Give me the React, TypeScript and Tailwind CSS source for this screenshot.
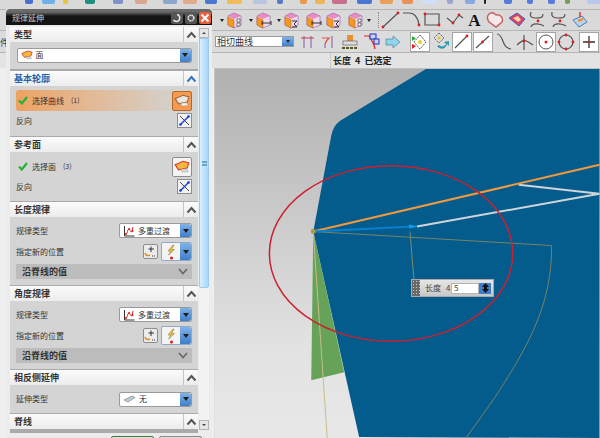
import type { ReactNode } from "react";

const cjk = { fontFamily: '"Noto Sans CJK SC", "Liberation Sans", sans-serif' };

function Chevron({ color = "#555" }: { color?: string }) {
  return (
    <svg width="11" height="8" viewBox="0 0 11 8">
      <path d="M1.5 6.5 L5.5 2 L9.5 6.5" fill="none" stroke={color} strokeWidth="2" />
    </svg>
  );
}

function SectionHeader({ title, active = false }: { title: string; active?: boolean }) {
  return (
    <div className="flex h-[15px] items-stretch bg-gradient-to-b from-[#fbfbfb] to-[#ececec]">
      <div className={`flex flex-1 items-center pl-1 text-[9px] font-bold ${active ? "text-[#1f63a8]" : "text-[#333]"}`}>
        {title}
      </div>
      <div className="flex w-[15px] items-center justify-center border-l border-[#c4c4c4]">
        <Chevron color={active ? "#2f77c4" : "#555"} />
      </div>
    </div>
  );
}

function DropArrow() {
  return (
    <div className="flex w-[11px] items-center justify-center rounded-r-[2px] bg-gradient-to-b from-[#7fb2e8] to-[#3f7fc9]">
      <div className="h-0 w-0 border-x-[3.5px] border-t-[4px] border-x-transparent border-t-[#1c1c1c]" />
    </div>
  );
}

function FaceIcon({ w = 14, pale = false }: { w?: number; pale?: boolean }) {
  return (
    <svg width={w} height={w * 0.8} viewBox="0 0 14 11">
      <path
        d="M1 4 L8 1 L13 2.5 L11.5 7 L4 8.5 Z"
        fill={pale ? "#ece6df" : "#f6b93a"}
        stroke={pale ? "#9a6a48" : "#d93a2a"}
        strokeWidth="1"
      />
      <path d="M6 8 L11 7.5 L12.5 10 L7 10.5 Z" fill={pale ? "#f6f1ec" : "#d8d8d8"} stroke="#999" strokeWidth="0.4" />
    </svg>
  );
}

function LawIcon() {
  return (
    <svg width="12" height="12" viewBox="0 0 12 12">
      <path d="M1.5 1 V11 H11.5" fill="none" stroke="#333" strokeWidth="1" />
      <path d="M2.5 9.5 C5 9 4 4 6 4 C7 4 7 7 9 7 L10 2" fill="none" stroke="#d22" strokeWidth="1" />
      <circle cx="3" cy="9" r="1" fill="#d22" />
      <circle cx="6" cy="4" r="1" fill="#d22" />
      <circle cx="9.5" cy="6" r="1" fill="#d22" />
    </svg>
  );
}

function Combo({ icon, label, className }: { icon: ReactNode; label: string; className: string }) {
  return (
    <div className={`flex h-[15px] overflow-hidden rounded-[2px] border border-[#9a9a9a] bg-white ${className}`}>
      <div className="flex flex-1 items-center gap-[3px] pl-[3px] text-[8px] text-[#333]">
        {icon}
        {label}
      </div>
      <DropArrow />
    </div>
  );
}

function ReverseBtn() {
  return (
    <div className="flex h-[15px] w-[15px] items-center justify-center border border-[#8d8d8d] bg-[#f2f2f2]">
      <svg width="13" height="13" viewBox="0 0 13 13">
        <path d="M2 2 L11 11" stroke="#444" strokeWidth="1" />
        <path d="M11 2 L2 11" stroke="#1a3fd0" strokeWidth="1.5" />
        <circle cx="10.5" cy="2.5" r="1.3" fill="#1a3fd0" />
        <circle cx="2.5" cy="10.5" r="1.3" fill="#1a3fd0" />
      </svg>
    </div>
  );
}

function Check() {
  return (
    <svg width="10" height="9" viewBox="0 0 10 9">
      <path d="M1 4.5 L3.8 7.5 L9 1" fill="none" stroke="#26b23a" strokeWidth="2.2" />
    </svg>
  );
}

function LawBody() {
  return (
    <div className="flex h-[68px] flex-col bg-[#d4d4d4] px-[6px] pt-[6px]">
      <div className="flex h-[15px] items-center justify-between text-[8px] text-[#333]">
        规律类型
        <Combo className="w-[73px]" icon={<LawIcon />} label="多重过渡" />
      </div>
      <div className="mt-[4px] flex h-[19px] items-center justify-between text-[8px] text-[#333]">
        指定新的位置
        <div className="flex items-center gap-[3px]">
          <div className="flex h-[15px] w-[15px] items-center justify-center rounded-[2px] border border-[#8d8d8d] bg-[#ececec]">
            <svg width="13" height="13" viewBox="0 0 13 13">
              <path d="M7 1.5 V7 M4.5 4 H10" stroke="#333" strokeWidth="1" />
              <path d="M1 8 C2 11 4 11 6 10" fill="none" stroke="#e8891c" strokeWidth="1.5" />
              <path d="M8 11 H12" stroke="#333" strokeDasharray="1 1" />
            </svg>
          </div>
          <div className="flex h-[19px] w-[31px] overflow-hidden rounded-[2px] border border-[#8fa9c6] bg-[#f4f4f4]">
            <div className="flex flex-1 items-center justify-center">
              <svg width="14" height="16" viewBox="0 0 14 16">
                <path d="M9 1 L4 7 H7 L4.5 11 L10.5 5.5 H7.5 L10 1 Z" fill="#f2c230" stroke="#8d8050" strokeWidth="0.6" />
                <circle cx="7.5" cy="14" r="1.5" fill="#e01818" />
              </svg>
            </div>
            <DropArrow />
          </div>
        </div>
      </div>
      <div className="mt-[3px] flex h-[15px] items-center justify-between bg-[#bcbcbc] px-1 pl-[6px] text-[9px] font-bold text-[#333]">
        沿脊线的值
        <svg width="10" height="7" viewBox="0 0 10 7">
          <path d="M1 1 L5 5.5 L9 1" fill="none" stroke="#666" strokeWidth="1.6" />
        </svg>
      </div>
    </div>
  );
}

function SelectRow({ label, count, active = false }: { label: string; count: string; active?: boolean }) {
  return (
    <div className="flex h-[21px] items-center">
      <div
        className={`flex h-[21px] w-[156px] items-center gap-[4px] rounded-l-[3px] pl-[1px] text-[8px] text-[#333] ${
          active ? "bg-gradient-to-r from-[#eda261] to-[#d4d0ca]" : ""
        }`}
      >
        <span className="ml-[1px]">
          <Check />
        </span>
        <span>{label}</span>
        <span className="ml-[3px] text-[7px]">{count}</span>
      </div>
      <div
        className={`flex h-[20px] w-[20px] items-center justify-center rounded-[2px] border ${
          active ? "border-[#b8672a] bg-[#f69a4f]" : "border-[#8d8d8d] bg-[#f3f3f3]"
        }`}
      >
        <FaceIcon w={16} pale={active} />
      </div>
    </div>
  );
}

function Dialog() {
  return (
    <div style={cjk} className="absolute left-[6px] top-[9px] flex h-[429px] w-[206px] flex-col bg-[#ececec]">
      <div className="flex h-[16px] items-center justify-between rounded-t-[4px] bg-gradient-to-b from-[#6a6a6a] from-20% to-[#141414] to-45% pl-[6px] pr-[1px] pt-[2px] text-[8px] text-[#cfcfcf]">
        规律延伸
        <div className="flex gap-[2px]">
          <div className="flex h-[12px] w-[12px] items-center justify-center rounded-[2px] bg-[#555]">
            <svg width="10" height="10" viewBox="0 0 10 10">
              <path d="M5 1.5 A3.5 3.5 0 1 1 1.5 7" fill="none" stroke="#eee" strokeWidth="1.5" />
            </svg>
          </div>
          <div className="flex h-[12px] w-[12px] items-center justify-center rounded-[2px] bg-[#555]">
            <svg width="10" height="10" viewBox="0 0 10 10">
              <circle cx="5" cy="5" r="2.8" fill="none" stroke="#eee" strokeWidth="1.6" strokeDasharray="1.6 0.6" />
            </svg>
          </div>
          <div className="flex h-[12px] w-[12px] items-center justify-center rounded-[2px] bg-[#e8603c]">
            <svg width="10" height="10" viewBox="0 0 10 10">
              <path d="M1.5 1.5 L8.5 8.5 M8.5 1.5 L1.5 8.5" stroke="#fff" strokeWidth="2" />
            </svg>
          </div>
        </div>
      </div>
      <div className="flex min-h-0 flex-1">
        <div className="ml-[4px] mt-[2px] flex h-[406px] w-[188px] shrink-0 flex-col gap-[1px] bg-[#aaa]">
          <div className="border-b border-[#a8a8a8]">
            <SectionHeader title="类型" />
            <div className="flex h-[27px] items-center justify-center bg-[#d4d4d4] pb-[1px]">
              <Combo className="w-[175px]" icon={<FaceIcon w={12} />} label="面" />
            </div>
          </div>
          <div>
            <SectionHeader title="基本轮廓" active />
            <div className="flex h-[50px] flex-col bg-[#d4d4d4] px-[6px] pt-[4px]">
              <SelectRow label="选择曲线" count="(1)" active />
              <div className="mt-[2px] flex items-center justify-between text-[8px] text-[#333]">
                反向
                <ReverseBtn />
              </div>
            </div>
          </div>
          <div>
            <SectionHeader title="参考面" />
            <div className="flex h-[49px] flex-col bg-[#d4d4d4] px-[6px] pt-[4px]">
              <SelectRow label="选择面" count="(3)" />
              <div className="mt-[2px] flex items-center justify-between text-[8px] text-[#333]">
                反向
                <ReverseBtn />
              </div>
            </div>
          </div>
          <div>
            <SectionHeader title="长度规律" />
            <LawBody />
          </div>
          <div>
            <SectionHeader title="角度规律" />
            <LawBody />
          </div>
          <div>
            <SectionHeader title="相反侧延伸" />
            <div className="flex h-[28px] items-center justify-between bg-[#d4d4d4] px-[6px] text-[8px] text-[#333]">
              延伸类型
              <Combo
                className="w-[73px]"
                label="无"
                icon={
                  <svg width="13" height="8" viewBox="0 0 13 8">
                    <path d="M1 5 L9 1 L12 2.5 L5 7 Z" fill="#b8d0d0" stroke="#777" strokeWidth="0.6" />
                  </svg>
                }
              />
            </div>
          </div>
          <SectionHeader title="脊线" />
        </div>
        <div className="ml-[1px] mt-[3px] flex h-[402px] w-[10px] flex-col bg-[#f2f2f2]">
          <div className="flex h-[10px] items-center justify-center border border-[#b5b5b5] bg-[#e6e6e6]">
            <div className="h-0 w-0 border-x-[2px] border-b-[2px] border-x-transparent border-b-[#444]" />
          </div>
          <div className="flex h-[250px] items-center justify-center rounded-b-[2px] border border-[#9ccbe8] bg-gradient-to-r from-[#d7f0ff] to-[#a6d8f6]">
            <div className="h-[5px] w-[5px] border-y border-[#6aa5cc] bg-[linear-gradient(#6aa5cc_1px,transparent_1px)] bg-[length:5px_2px]" />
          </div>
          <div className="mt-auto flex h-[10px] items-center justify-center border border-[#b5b5b5] bg-[#e6e6e6]">
            <div className="h-0 w-0 border-x-[2px] border-t-[2px] border-x-transparent border-t-[#444]" />
          </div>
        </div>
      </div>
      <div className="ml-[105px] flex h-[2px] gap-[5px] overflow-hidden">
        <div className="h-[10px] w-[43px] rounded-t-[2px] border border-[#3c7a3c] bg-[#dfe6df]" />
        <div className="h-[10px] w-[43px] rounded-t-[2px] border border-[#8a8a8a] bg-[#dedede]" />
      </div>
    </div>
  );
}

/* small CAD toolbar glyphs */
function Cube({ variant = 0, className = "" }: { variant?: number; className?: string }) {
  return (
    <svg className={className} width="17" height="17" viewBox="0 0 17 17">
      <path d="M8 1 L15 4 V13 L8 16 L2 13 V4 Z" fill="#efd9ef" stroke="#a678b8" strokeWidth="0.8" />
      <path d="M2 5 L8 8 V16 L2 13 Z" fill="#f59a1f" stroke="#c8641a" strokeWidth="0.6" />
      <path d="M2 4 L8 1 L15 4 L8 7 Z" fill="#e04fa0" opacity="0.55" />
      {variant === 0 && <path d="M11 7 H14 V10 H11 Z M11 11 H14 V14 H11 Z" fill="#fff" stroke="#444" strokeWidth="0.7" />}
      {variant === 1 && <path d="M7 11 H16 M7 9 V13 M16 9 V13" stroke="#333" strokeWidth="1" />}
      {variant === 2 && <path d="M9 9 H14 L11 12 L14 15 H9" fill="none" stroke="#333" strokeWidth="1" />}
    </svg>
  );
}

function Tiny({ className = "" }: { className?: string }) {
  return <div className={`h-0 w-0 border-x-[2.5px] border-t-[3px] border-x-transparent border-t-[#222] ${className}`} />;
}

function Glyph({ d, dots, className = "" }: { d: string; dots: number[][]; className?: string }) {
  return (
    <svg className={`shrink-0 ${className}`} width="20" height="20" viewBox="0 0 20 20">
      <path d={d} fill="none" stroke="#555" strokeWidth="1.2" />
      {dots.map(([x, y]) => (
        <circle key={`${x}-${y}`} cx={x} cy={y} r="1.4" fill="#d92020" />
      ))}
    </svg>
  );
}

function SnapBox({ children, className = "" }: { children: ReactNode; className?: string }) {
  return (
    <div className={`flex h-[20px] w-[20px] shrink-0 items-center justify-center border border-[#a5a5a5] bg-white ${className}`}>
      {children}
    </div>
  );
}

function ClippedRow() {
  // [left, width, colour] of the icons cut off by the top edge of the picture
  const items: [number, number, string][] = [
    [25, 8, "#4a6fd0"], [42, 13, "#6fb0ea"], [63, 5, "#e6c540"], [85, 10, "#1f8d7f"], [113, 10, "#7f8fc8"],
    [135, 12, "#dca58e"], [163, 14, "#8aa6cc"], [183, 14, "#e2a98c"], [205, 12, "#4a78d0"], [227, 15, "#f0bc5a"],
    [253, 14, "#b9c6e0"], [277, 6, "#5a78c8"], [300, 7, "#e89a4a"], [315, 10, "#eeb45a"], [332, 15, "#c8708a"],
    [357, 15, "#4a78d0"], [380, 13, "#e8a05a"], [402, 11, "#e8925a"], [422, 15, "#cfdff5"], [447, 6, "#9aa8d0"],
    [465, 10, "#8aa8e0"], [484, 2, "#222222"], [504, 8, "#5a7ad8"], [527, 6, "#5a7ad8"], [548, 7, "#5a7ad8"],
    [565, 5, "#7a9a5a"], [587, 13, "#b8c8ea"],
  ];
  return (
    <div className="flex h-[10px] overflow-hidden border-b border-[#b5b5b5] bg-[#d9d9d9]">
      {items.map(([x, w, c], i) => (
        <div
          key={x}
          className="h-[4px] shrink-0 rounded-b-[2px]"
          style={{
            backgroundColor: c,
            width: w,
            marginLeft: i === 0 ? x : x - items[i - 1][0] - items[i - 1][1],
          }}
        />
      ))}
    </div>
  );
}

function Toolbars() {
  return (
    <div style={cjk} className="flex flex-col">
      <ClippedRow />
      <div className="flex h-[21px] items-center border-b border-[#b5b5b5] bg-[#d9d9d9] pl-[220px]">
        <Tiny />
        <Cube className="ml-[2px]" />
        <Tiny className="ml-[6px]" />
        <Cube variant={1} className="ml-[2px]" />
        <Tiny className="ml-[5px]" />
        <Cube variant={2} className="ml-[2px]" />
        <Cube variant={1} className="ml-[5px]" />
        <Cube variant={2} className="ml-[3px]" />
        <Cube className="ml-[5px]" />
        <Tiny className="ml-[3px]" />
        <div className="ml-[7px] h-[16px] border-l border-dotted border-[#888]" />
        <Glyph d="M2 17 L17 3" dots={[[17, 3], [2, 17]]} className="ml-[2px]" />
        <Glyph d="M1 3 H7 C13 3 16 8 17 15" dots={[[17, 15]]} className="ml-[1px]" />
        <Glyph d="M3 4 H17 V15 H3 Z" dots={[[17, 15], [3, 4]]} />
        <Glyph d="M2 8 L8 13 L14 5 L18 8" dots={[[8, 13], [14, 5]]} className="ml-[3px]" />
        <span
          className="ml-[1px] w-[17px] text-center text-[17px] font-bold leading-none text-[#111]"
          style={{ fontFamily: '"Liberation Serif", serif' }}
        >
          A
        </span>
        <svg className="ml-[3px] shrink-0" width="20" height="18" viewBox="0 0 20 18">
          <path d="M3 3 C7 0 9 3 10 4 C13 3 18 6 16 11 L10 16 L3 11 C1 8 1 5 3 3 Z" fill="#f4e8e8" stroke="#c26060" strokeWidth="1.4" />
        </svg>
        <svg className="ml-[1px] shrink-0" width="20" height="18" viewBox="0 0 20 18">
          <path d="M2 7 L10 2 L18 8 L12 15 Z" fill="#e04060" stroke="#4060c0" strokeWidth="1" />
          <path d="M6 7 L11 5 L14 9 L11 11 Z" fill="#f6d9a8" />
        </svg>
        <Glyph d="M4 2 C2 7 5 8 9 8 C13 8 16 8 16 4 M4 17 C5 12 14 14 17 16" dots={[[11, 11]]} />
        <Glyph d="M3 2 C2 7 5 8 9 8 C13 8 16 8 16 4 M4 17 C5 12 14 14 17 16" dots={[[11, 11]]} className="ml-[2px]" />
        <svg className="ml-[2px] shrink-0" width="18" height="18" viewBox="0 0 18 18">
          <path d="M2 9 L11 5 L16 11 L8 16 Z" fill="#b8d4ee" stroke="#4a7cbc" strokeWidth="1" />
          <path d="M7 10 L12 8" stroke="#ef8a20" strokeWidth="2" />
          <path d="M9 1 V6" stroke="#d92020" strokeWidth="1.3" />
        </svg>
      </div>
      <div className="flex h-[22px] items-center border-b border-[#b5b5b5] bg-[#dcdcdc] pl-[215px] text-[9px] text-[#333]">
        <div className="flex h-[11px] w-[79px] items-center border border-[#9a9a9a] bg-white pl-[1px] leading-none">
          <span className="flex-1">相切曲线</span>
          <div className="flex h-full w-[11px] items-center justify-center bg-gradient-to-b from-[#7fb2e8] to-[#3f7fc9]">
            <Tiny />
          </div>
        </div>
        <div className="ml-[5px] flex items-center gap-[4px]">
          <svg width="17" height="17" viewBox="0 0 17 17">
            <path d="M2 5 H15" stroke="#e05040" strokeWidth="1.2" />
            <path d="M5 3 V15 M12 3 V15" stroke="#7a5aa8" strokeWidth="1" />
          </svg>
          <svg width="17" height="17" viewBox="0 0 17 17">
            <path d="M2 5 H9 C7 7 6 8 5 11" fill="none" stroke="#e05040" strokeWidth="1.2" />
            <path d="M5 11 V15 M12 3 V15" stroke="#7a5aa8" strokeWidth="1" />
          </svg>
          <svg width="18" height="18" viewBox="0 0 18 18">
            <rect x="6" y="2" width="6" height="6" fill="#e89030" />
            <rect x="2" y="8" width="14" height="4" fill="#dcdcdc" stroke="#666" strokeWidth="0.7" />
            <path d="M1 15 H17" stroke="#5a5a20" strokeWidth="2" strokeDasharray="3 1" />
          </svg>
          <svg width="18" height="18" viewBox="0 0 18 18">
            <path d="M1 3 H6 L9 8 L11 12 L12 16" fill="none" stroke="#e02020" strokeWidth="1.2" />
            <rect x="7" y="1" width="6" height="5" fill="#c8d0f0" stroke="#2030c0" />
            <rect x="11" y="6" width="5" height="5" fill="#c8d0f0" stroke="#2030c0" />
          </svg>
          <svg width="16" height="14" viewBox="0 0 16 14">
            <path d="M1 4 H8 V1 L15 7 L8 13 V10 H1 Z" fill="#8fd4e8" stroke="#5a8aa8" strokeWidth="0.8" />
          </svg>
        </div>
        <div className="ml-[9px] flex items-center gap-[1px]">
          <SnapBox>
            <svg width="18" height="18" viewBox="0 0 18 18">
              <path d="M9 2 L15 9 L9 16 L3 9 Z" fill="none" stroke="#555" strokeDasharray="2 1" />
              <circle cx="9" cy="9" r="2" fill="#f2d020" />
              <path d="M1 3 L5 5.5 L1 8 Z" fill="#22b030" />
              <path d="M1 11 L5 13 L1 16 Z" fill="#e02020" />
            </svg>
          </SnapBox>
          <svg className="shrink-0" width="20" height="20" viewBox="0 0 20 20">
            <path d="M8 1 L13 6 L8 11 L3 6 Z" fill="none" stroke="#666" strokeDasharray="2 1" />
            <circle cx="8" cy="6" r="1.6" fill="#e8c820" />
            <path d="M6 14 C9 18 14 18 16 12 L18 14 L18 9 L13 10 L15 12 C13 15 10 15 8 13 Z" fill="#2f9ab0" />
          </svg>
          <SnapBox>
            <Glyph d="M3 16 L15 4" dots={[[15, 4]]} />
          </SnapBox>
          <SnapBox>
            <Glyph d="M3 16 L16 4" dots={[[9.5, 10]]} />
          </SnapBox>
          <Glyph d="M3 2 C10 2 7 16 17 17" dots={[]} />
          <Glyph d="M2 13 C6 9 8 9 9 8 M9 3 V18 M9 8 C12 9 14 10 18 13" dots={[[9, 9]]} />
          <SnapBox>
            <svg width="18" height="18" viewBox="0 0 18 18">
              <circle cx="9" cy="9" r="7" fill="none" stroke="#555" />
              <circle cx="9" cy="9" r="1.5" fill="#d92020" />
            </svg>
          </SnapBox>
          <svg className="shrink-0" width="18" height="18" viewBox="0 0 18 18">
            <circle cx="9" cy="9" r="7" fill="none" stroke="#555" strokeWidth="1.2" />
            <circle cx="9" cy="2" r="1.4" fill="#d92020" />
            <circle cx="2" cy="9" r="1.4" fill="#d92020" />
            <circle cx="16" cy="9" r="1.4" fill="#d92020" />
            <circle cx="9" cy="16" r="1.4" fill="#d92020" />
          </svg>
          <SnapBox className="ml-[3px]">
            <svg width="16" height="16" viewBox="0 0 16 16">
              <path d="M8 2 V14 M2 8 H14" stroke="#333" strokeWidth="1.3" />
              <circle cx="8" cy="8" r="1.3" fill="#d92020" />
            </svg>
          </SnapBox>
        </div>
      </div>
      <div className="flex h-[15px] bg-[#e3e3e3] pl-[330px] text-[9px] font-bold text-[#222]">
        <div className="flex flex-1 items-center border-l border-[#c8c8c8] pl-[2px]">长度&nbsp;&nbsp;4&nbsp;&nbsp;已选定</div>
      </div>
    </div>
  );
}

function Viewport() {
  return (
    <svg className="block border-t border-[#c0c0c0]" width="386" height="370" viewBox="214 68 386 370">
      <defs>
        <linearGradient id="bgGrad" x1="0" y1="0" x2="0" y2="1">
          <stop offset="0" stopColor="#b0b0b0" />
          <stop offset="0.75" stopColor="#e2e2e3" />
          <stop offset="1" stopColor="#e8e8e9" />
        </linearGradient>
      </defs>
      <rect x="214" y="68" width="386" height="370" fill="url(#bgGrad)" />
      <path d="M426 68 L340 120 Q333 125 331 135 L313 231 L359 437 L600 438 V68 Z" fill="#035c8c" />
      <path d="M313 231 L344 372 L311 380 Z" fill="#66a359" />
      <path d="M313 231 L327 438" stroke="#c8bd8a" fill="none" />
      <path d="M313 231 L552 245 C552 300 535 345 466 438" stroke="#768465" fill="none" />
      <path d="M410 231 L414 280" stroke="#7a8a70" fill="none" />
      <path d="M519 184 L600 193 L417 226" stroke="#cfd4d8" strokeWidth="2" fill="none" />
      <path d="M313 231 L600 164" stroke="#f0993f" strokeWidth="2" fill="none" />
      <path d="M313 231 L413 226" stroke="#0a7fd0" strokeWidth="2" fill="none" />
      <path d="M409 224 L418 226 L409 228 Z" fill="#0aa0f0" />
      <circle cx="313" cy="231" r="2.5" fill="#b09a40" />
      <ellipse cx="391" cy="253" rx="122" ry="88" fill="none" stroke="#cc2030" strokeWidth="1.5" />
    </svg>
  );
}

function LengthInput() {
  return (
    <div
      style={cjk}
      className="absolute left-[411px] top-[279px] flex h-[18px] w-[83px] whitespace-nowrap border border-[#a8a8a8] bg-gradient-to-b from-[#e6e6e6] to-[#c8c8c8] text-[8px] text-[#444]"
    >
      <div className="w-[8px] shrink-0 bg-[#6a6a6a] bg-[radial-gradient(#ccc_0.6px,transparent_0.7px)] bg-[length:3px_3px]" />
      <div className="flex flex-1 items-center pl-[5px]">
        <span>长度</span>
        <span className="ml-[5px] w-[5px]">4</span>
        <div className="flex h-[11px] w-[28px] items-center border border-[#b5b5b5] bg-white pl-[2px]">5</div>
        <div className="flex h-[11px] w-[12px] items-center justify-center bg-[#3f7fc9]">
          <svg width="9" height="10" viewBox="0 0 9 10">
            <path d="M4.5 0 L8 4 H1 Z M1 6 H8 L4.5 10 Z M3 3 H6 V7 H3 Z" fill="#111" />
          </svg>
        </div>
      </div>
    </div>
  );
}

export default function App() {
  return (
    <div className="relative h-[438px] w-[600px] overflow-hidden bg-[#d9d9d9]">
      <Toolbars />
      <div className="flex">
        <div className="h-[370px] w-[214px] bg-[#eeeeee]" />
        <Viewport />
      </div>
      <div style={cjk} className="absolute left-0 top-[36px] text-[9px] text-[#333]">件</div>
      <Dialog />
      <LengthInput />
    </div>
  );
}
